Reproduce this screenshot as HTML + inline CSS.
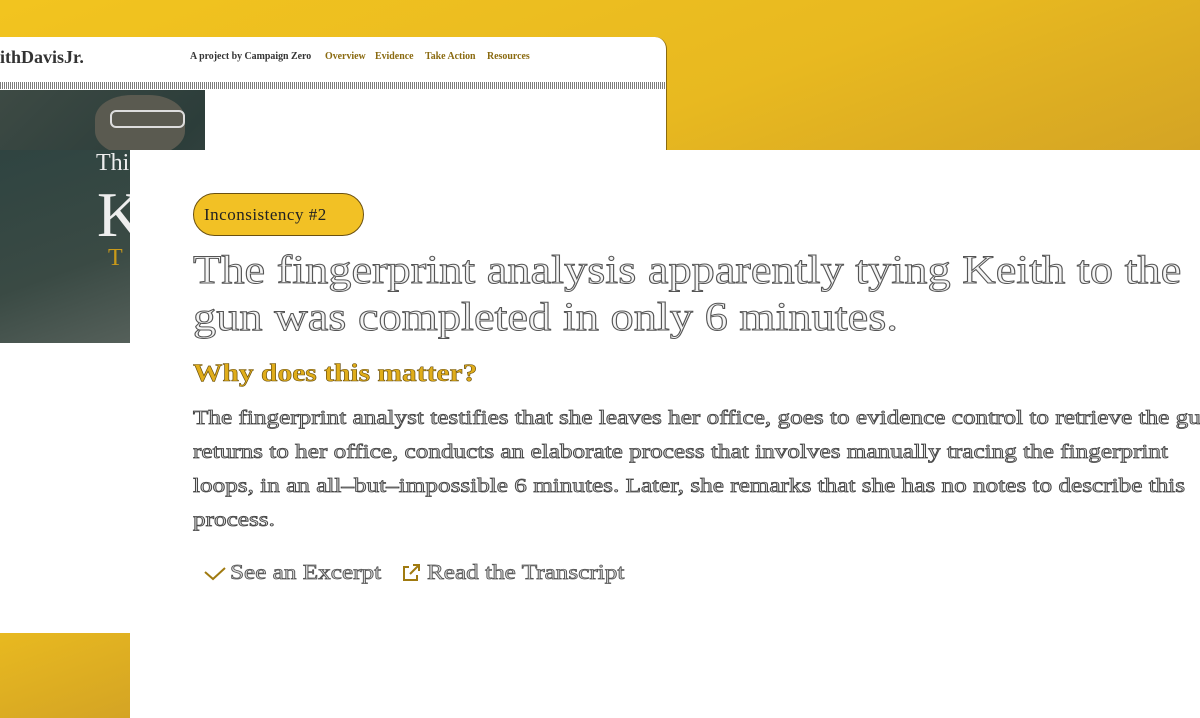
<!DOCTYPE html>
<html><head><meta charset="utf-8"><style>
*{margin:0;padding:0;box-sizing:border-box}
body{width:1200px;height:718px;overflow:hidden;position:relative;background:#fff;font-family:"Liberation Serif",serif}
.bg{position:absolute;left:0;top:0;width:1200px;height:150px;background:linear-gradient(160deg,#f2c41f 0%,#e8b920 60%,#d4a424 100%)}
.win{position:absolute;left:0;top:37px;width:667px;height:120px;background:#fff;border-radius:0 12px 0 0;border-right:1px solid #8a6a10}
.nav{position:absolute;top:13px;font-size:11px;font-weight:bold;white-space:nowrap;transform:scaleX(0.9);transform-origin:left}
.photo{position:absolute;left:0;top:90px;width:205px;height:253px;background:linear-gradient(135deg,#3d4a44,#2c3d3a 50%,#46504a);overflow:hidden}
.photo2{position:absolute;left:0;top:150px;width:130px;height:193px;background:linear-gradient(160deg,#2f4441,#3a4a44 60%,#55605a)}
.card{position:absolute;left:130px;top:150px;width:1070px;height:568px;background:#fff}
.yb{position:absolute;left:0;top:633px;width:130px;height:85px;background:linear-gradient(160deg,#e8b920,#d4a424)}
.pill{position:absolute;left:193px;top:193px;width:171px;height:43px;border-radius:22px;background:#f2c125;border:1px solid #6a5010;font-size:17px;line-height:41px;padding-left:10px;color:#222;letter-spacing:0.5px}
.o{color:#f4f4f4;-webkit-text-stroke:1px #555;white-space:nowrap;transform-origin:left top}
h1{position:absolute;left:193px;top:246px;font-size:40px;line-height:47px;font-weight:normal;transform:scaleX(1.16)}
h2{position:absolute;left:193px;top:360px;font-size:25px;color:#e0ad1a;-webkit-text-stroke:0.6px #6a5010;font-weight:bold;transform:scaleX(1.18);transform-origin:left top}
p{position:absolute;left:193px;top:401px;font-size:20px;line-height:34px;transform:scaleX(1.26)}
.lk{position:absolute;top:560px;font-size:21px}
</style></head><body>
<div class="bg"></div>
<div class="win">
<div style="position:absolute;left:0;top:10px;font-size:18px;font-weight:bold;color:#333">ithDavisJr.</div>
<div class="nav" style="left:190px;color:#333">A project by Campaign Zero</div>
<div class="nav" style="left:325px;color:#8a6a10">Overview</div>
<div class="nav" style="left:375px;color:#8a6a10">Evidence</div>
<div class="nav" style="left:425px;color:#8a6a10">Take Action</div>
<div class="nav" style="left:487px;color:#8a6a10">Resources</div>
<div style="position:absolute;left:0;top:45px;width:666px;height:7px;background:repeating-linear-gradient(90deg,#444 0 1px,#fff 1px 2px);opacity:.7"></div>
</div>
<div class="photo">
<div style="position:absolute;left:95px;top:5px;width:90px;height:60px;background:#5a5a50;border-radius:40%"></div>
<div style="position:absolute;left:110px;top:20px;width:75px;height:18px;border:2px solid #ddd;border-radius:6px"></div>
</div>
<div class="photo2">
<div style="position:absolute;left:96px;top:0;color:#eee;font-size:24px">Thi</div>
<div style="position:absolute;left:97px;top:28px;color:#eee;font-size:64px">K</div>
<div style="position:absolute;left:108px;top:95px;color:#c99a1a;font-size:24px">T</div>
</div>
<div class="card"></div>
<div class="yb"></div>
<div class="pill">Inconsistency #2</div>
<h1 class="o">The fingerprint analysis apparently tying Keith to the<br>gun was completed in only 6 minutes.</h1>
<h2>Why does this matter?</h2>
<p class="o" style="-webkit-text-stroke:0.8px #444;color:#ddd">The fingerprint analyst testifies that she leaves her office, goes to evidence control to retrieve the gun,<br>returns to her office, conducts an elaborate process that involves manually tracing the fingerprint<br>loops, in an all–but–impossible 6 minutes. Later, she remarks that she has no notes to describe this<br>process.</p>
<svg style="position:absolute;left:203px;top:566px" width="26" height="22"><path d="M2 6 L10 13 L22 2" stroke="#a07a10" stroke-width="2" fill="none"/></svg>
<div class="lk o" style="left:230px;-webkit-text-stroke:0.8px #555;color:#ddd;transform:scaleX(1.2)">See an Excerpt</div>
<svg style="position:absolute;left:401px;top:563px" width="20" height="20"><path d="M8 4 H3 V17 H16 V12" stroke="#a07a10" stroke-width="2" fill="none"/><path d="M9 11 L18 2 M12 2 H18 V8" stroke="#a07a10" stroke-width="2" fill="none"/></svg>
<div class="lk o" style="left:427px;-webkit-text-stroke:0.8px #555;color:#ddd;transform:scaleX(1.2)">Read the Transcript</div>
</body></html>
